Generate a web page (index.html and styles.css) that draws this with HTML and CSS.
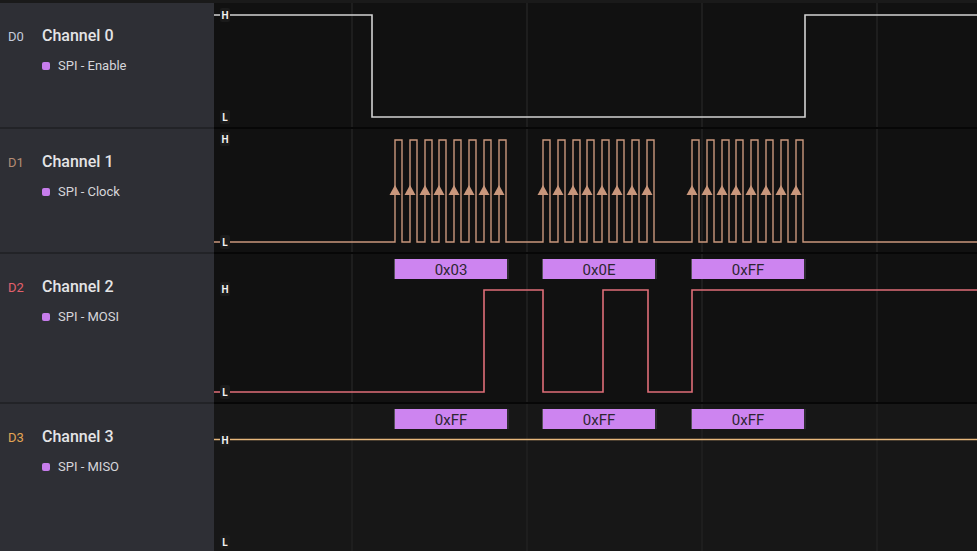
FILE: index.html
```html
<!doctype html>
<html>
    <head>
        <title>Logic Analyzer</title>
        <meta charset="UTF-8">
        <link rel="stylesheet" href="styles.css">
    </head>

    <body>
        <div class="topbar"></div>

        <!--Channel 0-->
        <div class="row r0">
            <div class="label">
                <div class="head">
                    <span class="dnum d0">D0</span>
                    <span class="name">Channel 0</span>
                </div>
                <div class="proto"><span class="dot"></span>SPI - Enable</div>
            </div>
            <svg class="wave" width="763" height="124">
                <g class="grid">
                    <line x1="138" y1="0" x2="138" y2="124"/>
                    <line x1="313" y1="0" x2="313" y2="124"/>
                    <line x1="488" y1="0" x2="488" y2="124"/>
                    <line x1="663" y1="0" x2="663" y2="124"/>
                </g>
                <path class="sig en" d="M0 12 H158 V114 H591 V12 H763"/>
                <g class="lvl">
                    <rect x="6" y="5" width="10" height="14" rx="2"/><text x="11" y="16">H</text>
                    <rect x="6" y="107" width="10" height="14" rx="2"/><text x="11" y="118">L</text>
                </g>
            </svg>
        </div>

        <!--Channel 1-->
        <div class="row r1">
            <div class="label">
                <div class="head">
                    <span class="dnum d1">D1</span>
                    <span class="name">Channel 1</span>
                </div>
                <div class="proto"><span class="dot"></span>SPI - Clock</div>
            </div>
            <svg class="wave" width="763" height="123">
                <g class="grid">
                    <line x1="138" y1="0" x2="138" y2="123"/>
                    <line x1="313" y1="0" x2="313" y2="123"/>
                    <line x1="488" y1="0" x2="488" y2="123"/>
                    <line x1="663" y1="0" x2="663" y2="123"/>
                </g>
                <path class="sig clk" d="M0 113 H181 V11 H188 V113 H196 V11 H203 V113 H211 V11 H218 V113 H225 V11 H232 V113 H240 V11 H247 V113 H255 V11 H262 V113 H270 V11 H277 V113 H285 V11 H292 V113 H329 V11 H336 V113 H344 V11 H351 V113 H359 V11 H366 V113 H373 V11 H380 V113 H388 V11 H395 V113 H403 V11 H410 V113 H418 V11 H425 V113 H433 V11 H440 V113 H478 V11 H485 V113 H493 V11 H500 V113 H508 V11 H515 V113 H522 V11 H529 V113 H537 V11 H544 V113 H552 V11 H559 V113 H567 V11 H574 V113 H582 V11 H589 V113 H763"/>
                <g class="edge">
                    <polygon points="175.5,66 181,56 186.5,66"/>
                    <polygon points="190.5,66 196,56 201.5,66"/>
                    <polygon points="205.5,66 211,56 216.5,66"/>
                    <polygon points="219.5,66 225,56 230.5,66"/>
                    <polygon points="234.5,66 240,56 245.5,66"/>
                    <polygon points="249.5,66 255,56 260.5,66"/>
                    <polygon points="264.5,66 270,56 275.5,66"/>
                    <polygon points="279.5,66 285,56 290.5,66"/>
                    <polygon points="323.5,66 329,56 334.5,66"/>
                    <polygon points="338.5,66 344,56 349.5,66"/>
                    <polygon points="353.5,66 359,56 364.5,66"/>
                    <polygon points="367.5,66 373,56 378.5,66"/>
                    <polygon points="382.5,66 388,56 393.5,66"/>
                    <polygon points="397.5,66 403,56 408.5,66"/>
                    <polygon points="412.5,66 418,56 423.5,66"/>
                    <polygon points="427.5,66 433,56 438.5,66"/>
                    <polygon points="472.5,66 478,56 483.5,66"/>
                    <polygon points="487.5,66 493,56 498.5,66"/>
                    <polygon points="502.5,66 508,56 513.5,66"/>
                    <polygon points="516.5,66 522,56 527.5,66"/>
                    <polygon points="531.5,66 537,56 542.5,66"/>
                    <polygon points="546.5,66 552,56 557.5,66"/>
                    <polygon points="561.5,66 567,56 572.5,66"/>
                    <polygon points="576.5,66 582,56 587.5,66"/>
                </g>
                <g class="lvl">
                    <rect x="6" y="3" width="10" height="14" rx="2"/><text x="11" y="14">H</text>
                    <rect x="6" y="106" width="10" height="14" rx="2"/><text x="11" y="117">L</text>
                </g>
            </svg>
        </div>

        <!--Channel 2-->
        <div class="row r2">
            <div class="label">
                <div class="head">
                    <span class="dnum d2">D2</span>
                    <span class="name">Channel 2</span>
                </div>
                <div class="proto"><span class="dot"></span>SPI - MOSI</div>
            </div>
            <svg class="wave" width="763" height="148">
                <g class="grid">
                    <line x1="138" y1="0" x2="138" y2="148"/>
                    <line x1="313" y1="0" x2="313" y2="148"/>
                    <line x1="488" y1="0" x2="488" y2="148"/>
                    <line x1="663" y1="0" x2="663" y2="148"/>
                </g>
                <g class="frame">
                    <rect class="box" x="181" y="5" width="112" height="20"/>
                    <line class="bl" x1="180.5" y1="5" x2="180.5" y2="25"/>
                    <line class="br" x1="294" y1="5" x2="294" y2="25"/>
                    <text x="237" y="20.5">0x03</text>
                </g>
                <g class="frame">
                    <rect class="box" x="329" y="5" width="112" height="20"/>
                    <line class="bl" x1="328.5" y1="5" x2="328.5" y2="25"/>
                    <line class="br" x1="442" y1="5" x2="442" y2="25"/>
                    <text x="385" y="20.5">0x0E</text>
                </g>
                <g class="frame">
                    <rect class="box" x="478" y="5" width="112" height="20"/>
                    <line class="bl" x1="477.5" y1="5" x2="477.5" y2="25"/>
                    <line class="br" x1="591" y1="5" x2="591" y2="25"/>
                    <text x="534" y="20.5">0xFF</text>
                </g>
                <path class="sig mosi" d="M0 138 H270 V36 H329 V138 H389 V36 H434 V138 H478 V36 H763"/>
                <g class="lvl">
                    <rect x="6" y="28" width="10" height="14" rx="2"/><text x="11" y="39">H</text>
                    <rect x="6" y="131" width="10" height="14" rx="2"/><text x="11" y="142">L</text>
                </g>
            </svg>
        </div>

        <!--Channel 3-->
        <div class="row r3">
            <div class="label">
                <div class="head">
                    <span class="dnum d3">D3</span>
                    <span class="name">Channel 3</span>
                </div>
                <div class="proto"><span class="dot"></span>SPI - MISO</div>
            </div>
            <svg class="wave" width="763" height="147">
                <g class="grid">
                    <line x1="138" y1="0" x2="138" y2="147"/>
                    <line x1="313" y1="0" x2="313" y2="147"/>
                    <line x1="488" y1="0" x2="488" y2="147"/>
                    <line x1="663" y1="0" x2="663" y2="147"/>
                </g>
                <g class="frame">
                    <rect class="box" x="181" y="5" width="112" height="20"/>
                    <line class="bl" x1="180.5" y1="5" x2="180.5" y2="25"/>
                    <line class="br" x1="294" y1="5" x2="294" y2="25"/>
                    <text x="237" y="20.5">0xFF</text>
                </g>
                <g class="frame">
                    <rect class="box" x="329" y="5" width="112" height="20"/>
                    <line class="bl" x1="328.5" y1="5" x2="328.5" y2="25"/>
                    <line class="br" x1="442" y1="5" x2="442" y2="25"/>
                    <text x="385" y="20.5">0xFF</text>
                </g>
                <g class="frame">
                    <rect class="box" x="478" y="5" width="112" height="20"/>
                    <line class="bl" x1="477.5" y1="5" x2="477.5" y2="25"/>
                    <line class="br" x1="591" y1="5" x2="591" y2="25"/>
                    <text x="534" y="20.5">0xFF</text>
                </g>
                <path class="sig miso" d="M0 35.5 H763"/>
                <g class="lvl">
                    <rect x="6" y="29" width="10" height="14" rx="2"/><text x="11" y="40">H</text>
                    <rect x="6" y="131" width="10" height="14" rx="2"/><text x="11" y="142">L</text>
                </g>
            </svg>
        </div>
    </body>
</html>
```

FILE: styles.css
```css
body{
    margin: 0;
    padding: 0;
    background: #111111;
    font-family: Roboto, "Liberation Sans", Arial, sans-serif;
    overflow: hidden;
}

.topbar{
    height: 3px;
    background: #1a1a1a;
}

/* Rows */
.row{
    display: flex;
}
.row .label{
    width: 214px;
    flex-shrink: 0;
    box-sizing: border-box;
    padding: 23px 0 0 8px;
    background: #2e2f35;
    border-bottom: 2px solid #222327;
}
.row .wave{
    display: block;
    background: #111111;
    border-bottom: 2px solid #070707;
}
.r0 .label{ height: 126px; }
.r1 .label{ height: 125px; }
.r2 .label{ height: 150px; }
.r3 .label{ height: 149px; }
.r3 .wave{ background: #171717; }

/* Label text */
.label .head{
    display: flex;
    align-items: baseline;
    line-height: 20px;
}
.label .dnum{
    width: 34px;
    font-size: 13px;
}
.d0{ color: #c6ccdc; }
.d1{ color: #b48c74; }
.d2{ color: #e2606c; }
.d3{ color: #e2a554; }
.label .name{
    font-size: 16px;
    font-weight: 500;
    color: #e4e4e6;
}
.label .proto{
    display: flex;
    align-items: center;
    margin: 11px 0 0 34px;
    font-size: 13px;
    line-height: 16px;
    color: #d6d6da;
}
.label .dot{
    width: 8px;
    height: 8px;
    border-radius: 2px;
    background: #c77dec;
    margin-right: 8px;
}

/* Waveforms */
.grid line{
    stroke: #1e1e1e;
    stroke-width: 2;
}
.sig{
    fill: none;
    stroke-width: 1.6;
}
.sig.en{ stroke: #d2d2d2; }
.sig.clk{ stroke: #c9977c; stroke-width: 1.4; }
.sig.mosi{ stroke: #df6e78; }
.sig.miso{ stroke: #e8b87c; }
.edge polygon{
    fill: #c9977c;
}

.lvl rect{
    fill: #1b1b1b;
}
.lvl text{
    fill: #f2f2f2;
    font-size: 10px;
    font-weight: 700;
    text-anchor: middle;
}

/* Decoded frames */
.frame .box{
    fill: #cd84f0;
}
.frame .bl{
    stroke: #55505a;
    stroke-width: 1;
}
.frame .br{
    stroke: #2c2a2e;
    stroke-width: 2;
}
.frame text{
    fill: #2c2630;
    font-size: 15px;
    text-anchor: middle;
}
```
